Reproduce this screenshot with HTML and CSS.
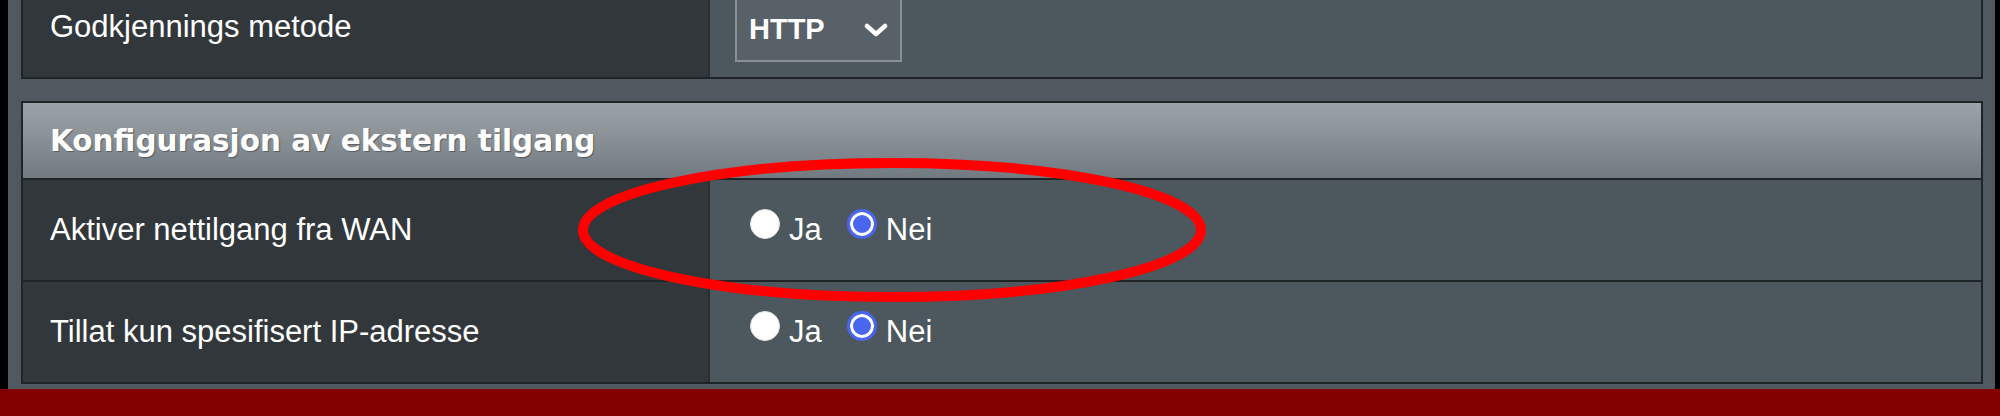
FILE: index.html
```html
<!DOCTYPE html>
<html lang="no">
<head>
  <meta charset="UTF-8" />
  <title>Ekstern tilgang</title>
  <link rel="stylesheet" href="styles.css">
</head>
<body>

  <div class="frame">
    <div class="table table-top">
      <div class="row">
        <div class="label">Godkjennings metode</div>
        <div class="value">
          <div class="select">
            <span>HTTP</span>
            <svg class="chevron" viewBox="0 0 24 14" width="24" height="14">
              <path d="M3 3 L12 11 L21 3" fill="none" stroke="#fff" stroke-width="4.5" stroke-linecap="round" stroke-linejoin="round"/>
            </svg>
          </div>
        </div>
      </div>
    </div>

    <div class="table">
      <div class="head">Konfigurasjon av ekstern tilgang</div>
      <div class="row">
        <div class="label">Aktiver nettilgang fra WAN</div>
        <div class="value">
          <label class="opt"><input type="radio" name="wan"> Ja</label>
          <label class="opt"><input type="radio" name="wan" checked> Nei</label>
        </div>
      </div>
      <div class="row">
        <div class="label">Tillat kun spesifisert IP-adresse</div>
        <div class="value">
          <label class="opt"><input type="radio" name="ip"> Ja</label>
          <label class="opt"><input type="radio" name="ip" checked> Nei</label>
        </div>
      </div>
    </div>
  </div>

  <div class="footer"></div>

  <!-- red marker drawn over the WAN row -->
  <svg class="mark" width="640" height="155" viewBox="0 0 640 155">
    <ellipse cx="319" cy="77" rx="309" ry="67" fill="none" stroke="#ff0000" stroke-width="10"/>
  </svg>

</body>
</html>
```

FILE: styles.css
```css
:root {
  --frame: #50595f;
  --line: #1f2427;
  --label-bg: #32373b;
  --value-bg: #4d575e;
  --text: #ffffff;
}

body {
  margin: 0;
  height: 416px;
  overflow: hidden;
  background: #000;
  font-family: "Liberation Sans", Arial, sans-serif;
  color: var(--text);
  position: relative;
}

.frame {
  display: flex;
  flex-direction: column;
  margin: 0 5px 0 8px;
  padding: 0 12px 5px 13px;
  background: var(--frame);
}

.table {
  border: 2px solid var(--line);
  margin-top: 22px;
}

.table-top {
  margin-top: -25px;
}

.head {
  height: 75px;
  display: flex;
  align-items: center;
  padding-left: 27px;
  font-family: "DejaVu Sans", Verdana, sans-serif;
  font-weight: bold;
  font-size: 29.5px;
  text-shadow: 1px 1px 1px rgba(0, 0, 0, 0.35);
  background: linear-gradient(#9ba3a9, #8a9298 45%, #717a81);
}

.row {
  display: flex;
  height: 100px;
  border-top: 2px solid var(--line);
}

.table-top .row {
  border-top: none;
}

.label {
  width: 658px;
  padding-left: 27px;
  display: flex;
  align-items: center;
  font-size: 31px;
  background: var(--label-bg);
  border-right: 2px solid #2a2f33;
}

.value {
  flex: 1;
  display: flex;
  align-items: center;
  padding-left: 40px;
  gap: 25px;
  background: var(--value-bg);
}

.opt {
  display: flex;
  align-items: center;
  gap: 9px;
  font-size: 31px;
}

.opt input {
  appearance: none;
  -webkit-appearance: none;
  width: 30px;
  height: 30px;
  margin: 0 0 12px;
  border-radius: 50%;
  background: #fff;
  border: 1px solid #e4e4e4;
}

.opt input:checked {
  background: #4866ef;
  border: 3px solid #4866ef;
  box-shadow: inset 0 0 0 3px #fff;
}

.select {
  box-sizing: border-box;
  display: flex;
  align-items: center;
  justify-content: space-between;
  width: 167px;
  height: 66px;
  margin: 4px 0 0 -15px;
  padding: 0 12px 0 12px;
  background: #586167;
  border: 2px solid #899196;
  font-weight: bold;
  font-size: 29px;
}

.chevron {
  margin-top: 2px;
}

.footer {
  height: 27px;
  background: #830000;
}

.mark {
  position: absolute;
  left: 573px;
  top: 153px;
}
```
